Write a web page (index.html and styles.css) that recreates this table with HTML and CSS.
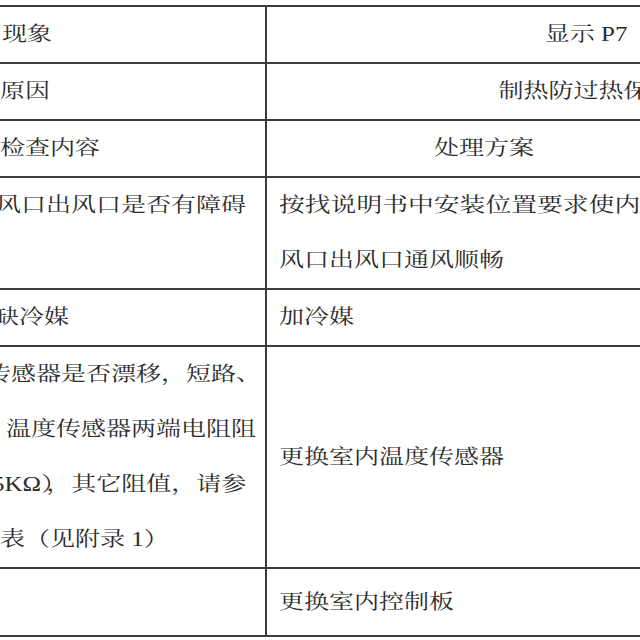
FILE: index.html
```html
<!DOCTYPE html>
<html lang="zh-CN">
<head>
<meta charset="utf-8">
<title>故障处理表</title>
<link rel="stylesheet" href="styles.css">
</head>
<body>
<div class="page">
  <div class="sheet">
    <div class="cell left"><div class="ln o2"><span class="tx">现象</span></div></div>
    <div class="cell wide center"><div class="ln"><span class="tx">显示 P7</span></div></div>

    <div class="cell left"><div class="ln o0"><span class="tx">原因</span></div></div>
    <div class="cell wide center"><div class="ln"><span class="tx">制热防过热保护</span></div></div>

    <div class="cell left"><div class="ln o0"><span class="tx">检查内容</span></div></div>
    <div class="cell mid center"><div class="ln"><span class="tx">处理方案</span></div></div>
    <div class="cell last"></div>

    <div class="cell left"><div class="ln om4"><span class="tx">风口出风口是否有障碍</span></div></div>
    <div class="cell mid right">
      <div class="ln"><span class="tx wider">按找说明书中安装位置要求使内机进</span></div>
      <div class="ln"><span class="tx">风口出风口通风顺畅</span></div>
    </div>
    <div class="cell last"></div>

    <div class="cell left"><div class="ln om6"><span class="tx">缺冷媒</span></div></div>
    <div class="cell mid right"><div class="ln"><span class="tx">加冷媒</span></div></div>
    <div class="cell last"></div>

    <div class="cell left">
      <div class="ln om14"><span class="tx">传感器是否漂移，短路、</span></div>
      <div class="ln o6"><span class="tx">温度传感器两端电阻阻</span></div>
      <div class="ln om8"><span class="tx">5KΩ<span class="tight">）</span>，其它阻值，请参</span></div>
      <div class="ln o0"><span class="tx">表（见附录 1）</span></div>
    </div>
    <div class="cell mid right vcenter"><div class="ln"><span class="tx">更换室内温度传感器</span></div></div>
    <div class="cell last"></div>

    <div class="cell left tall"></div>
    <div class="cell mid right tall"><div class="ln"><span class="tx">更换室内控制板</span></div></div>
    <div class="cell last tall"></div>
  </div>
</div>
</body>
</html>
```

FILE: styles.css
```css
html, body {
  margin: 0;
  padding: 0;
  background: #ffffff;
}

.page {
  width: 640px;
  height: 640px;
  overflow: hidden;
  background: #ffffff;
}

.sheet {
  display: grid;
  grid-template-columns: 327px 436px 204px;
  width: max-content;
  margin-left: -60px;
  margin-top: 5px;
  border-top: 2px solid #3c3c3c;
  font-family: "Liberation Serif", "Noto Serif CJK SC", "Noto Sans CJK SC", serif;
  font-size: 20px;
  line-height: 55px;
  color: #2b2b2b;
}

.cell {
  box-sizing: border-box;
  border-right: 2px solid #3c3c3c;
  border-bottom: 2px solid #3c3c3c;
  white-space: nowrap;
  min-height: 57px;
}

.left {
  padding-left: 60px;
}

.wide {
  grid-column: 2 / span 2;
}

.center {
  text-align: center;
}

.right {
  padding-left: 12px;
}

.vcenter {
  display: flex;
  flex-direction: column;
  justify-content: center;
}

.tall {
  min-height: 68px;
  padding-top: 6px;
}

.ln {
  height: 55px;
}

/* the scanned table is stretched horizontally: widen glyphs */
.tx {
  display: inline-block;
  transform: scaleX(1.25);
  transform-origin: left center;
}

.tx.wider {
  transform: scaleX(1.29);
}

.center .tx {
  transform-origin: center center;
}

.tight {
  letter-spacing: -6px;
}

.o2 { margin-left: 2px; }
.o0 { margin-left: 0; }
.o6 { margin-left: 6px; }
.om4 { margin-left: -4px; }
.om6 { margin-left: -6px; }
.om8 { margin-left: -8px; }
.om14 { margin-left: -14px; }
```
